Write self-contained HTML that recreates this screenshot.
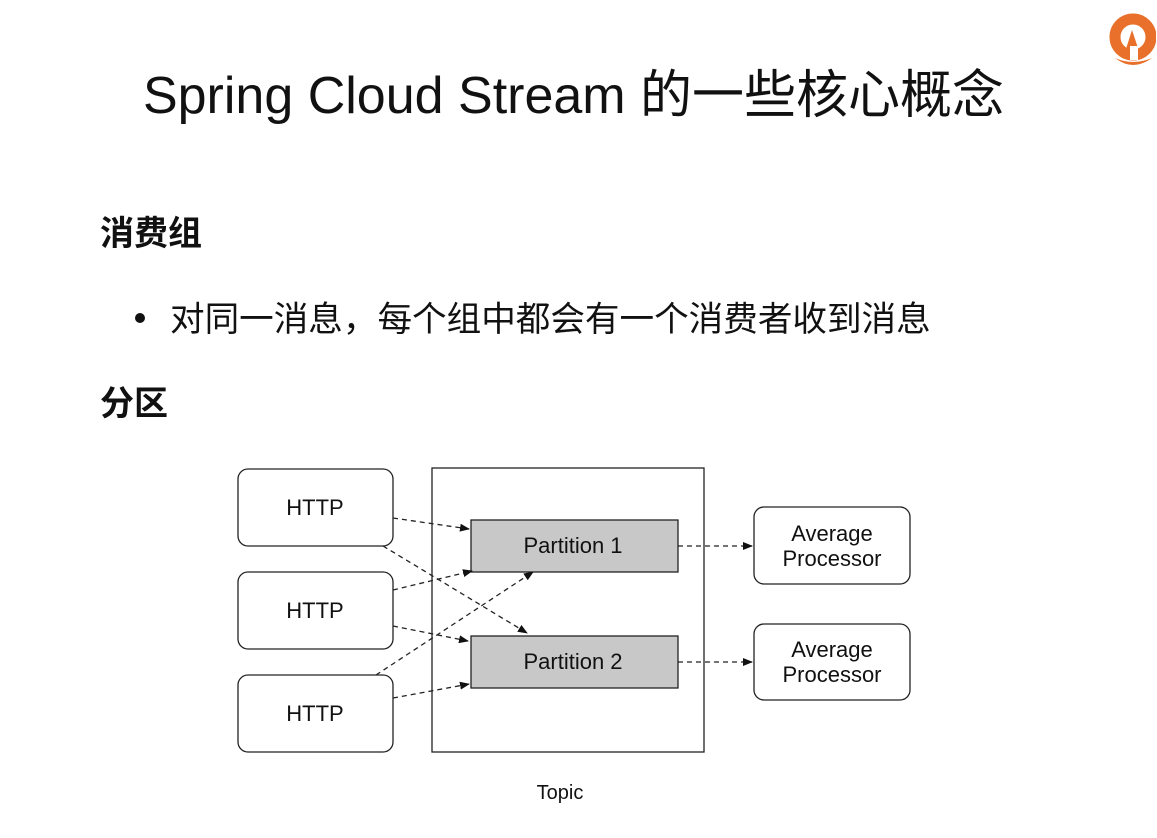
<!DOCTYPE html>
<html><head><meta charset="utf-8"><style>
body{margin:0;width:1157px;height:838px;background:#fff;overflow:hidden;position:relative;font-family:"Liberation Sans","Noto Sans CJK SC",sans-serif;color:#111}
.t{position:absolute;white-space:nowrap}
</style></head><body>
<div class="t" style="left:0;width:1147px;text-align:center;top:53px;font-size:52px;">Spring Cloud Stream 的一些核心概念</div>
<div class="t" style="left:100px;top:206px;font-size:34px;font-weight:bold">消费组</div>
<div style="position:absolute;left:135px;top:313px;width:10px;height:10px;border-radius:50%;background:#111"></div>
<div class="t" style="left:170px;top:291px;font-size:34.6px">对同一消息，每个组中都会有一个消费者收到消息</div>
<div class="t" style="left:100px;top:376px;font-size:34px;font-weight:bold">分区</div>
<svg style="position:absolute;left:1108px;top:8px" width="48" height="64" viewBox="0 0 48 64">
<circle cx="25" cy="29" r="18" fill="none" stroke="#e8702a" stroke-width="11"/>
<path d="M17 44 L24 22 L30 40 Z" fill="#e8702a"/>
<rect x="22" y="38" width="8" height="14" fill="#fff"/>
<path d="M7 50 Q25 64 44 50 Q25 58 7 50Z" fill="#e8702a"/>
</svg>
<svg style="position:absolute;left:0;top:0" width="1157" height="838">
<defs><marker id="a" markerWidth="10" markerHeight="8" refX="9" refY="4" orient="auto" markerUnits="userSpaceOnUse"><path d="M0 0L10 4L0 8Z" fill="#111"/></marker></defs>
<g fill="#fff" stroke="#222" stroke-width="1.3">
<rect x="238" y="469" width="155" height="77" rx="10"/>
<rect x="238" y="572" width="155" height="77" rx="10"/>
<rect x="238" y="675" width="155" height="77" rx="10"/>
<rect x="432" y="468" width="272" height="284"/>
<rect x="471" y="520" width="207" height="52" fill="#c8c8c8"/>
<rect x="471" y="636" width="207" height="52" fill="#c8c8c8"/>
<rect x="754" y="507" width="156" height="77" rx="10"/>
<rect x="754" y="624" width="156" height="76" rx="10"/>
</g>
<g stroke="#222" stroke-width="1.3" stroke-dasharray="5,4" fill="none" marker-end="url(#a)">
<line x1="393" y1="518" x2="469" y2="529"/>
<line x1="383" y1="546" x2="527" y2="633"/>
<line x1="393" y1="590" x2="472" y2="571"/>
<line x1="393" y1="626" x2="468" y2="641"/>
<line x1="376" y1="675" x2="533" y2="572"/>
<line x1="393" y1="698" x2="469" y2="684"/>
<line x1="678" y1="546" x2="752" y2="546"/>
<line x1="678" y1="662" x2="752" y2="662"/>
</g>
<g font-family="Liberation Sans,sans-serif" font-size="22" fill="#111" text-anchor="middle">
<text x="315" y="515">HTTP</text><text x="315" y="618">HTTP</text><text x="315" y="721">HTTP</text>
<text x="573" y="553">Partition 1</text><text x="573" y="669">Partition 2</text>
<text x="832" y="541">Average</text><text x="832" y="566">Processor</text>
<text x="832" y="657">Average</text><text x="832" y="682">Processor</text>
<text x="560" y="799" font-size="20">Topic</text>
</g>
</svg>
</body></html>
